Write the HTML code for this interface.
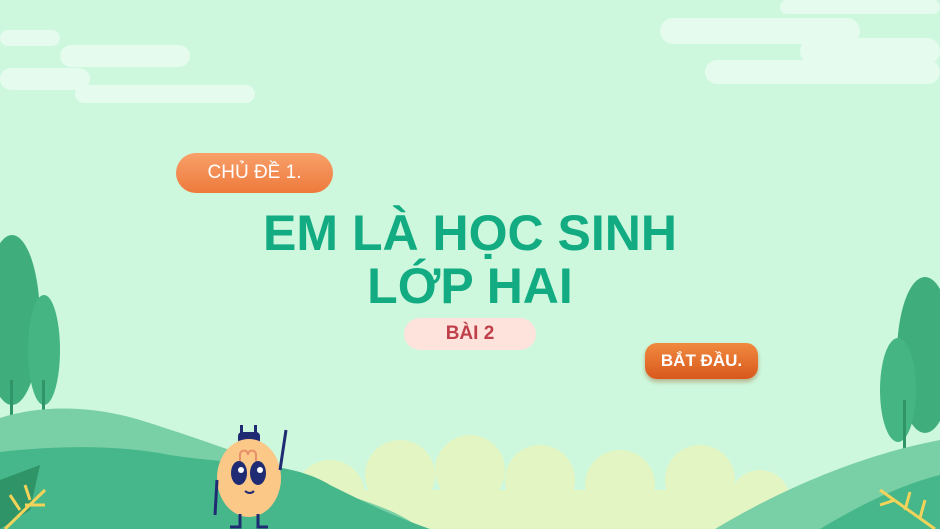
<!DOCTYPE html>
<html><head><meta charset="utf-8"><style>
body{margin:0;width:940px;height:529px;overflow:hidden;background:#cdf8dd;font-family:"Liberation Sans",sans-serif;position:relative}
svg{position:absolute;left:0;top:0}
.t{position:absolute;left:0;width:940px;text-align:center;color:#12ab82;font-weight:bold;font-size:50px;letter-spacing:0px}
.pill{position:absolute;border-radius:20px;text-align:center;font-weight:bold}
</style></head><body>
<svg width="940" height="529" viewBox="0 0 940 529">
<g fill="#e4fbee">
<rect x="660" y="18" width="200" height="26" rx="13"/><rect x="705" y="60" width="235" height="24" rx="12"/><rect x="780" y="0" width="160" height="14" rx="7"/><rect x="800" y="38" width="140" height="26" rx="13"/>
<rect x="0" y="68" width="90" height="22" rx="11"/><rect x="60" y="45" width="130" height="22" rx="11"/><rect x="75" y="85" width="180" height="18" rx="9"/><rect x="0" y="30" width="60" height="16" rx="8"/>
</g>
<g fill="#e3f5c3"><circle cx="330" cy="495" r="35"/><circle cx="400" cy="475" r="35"/><circle cx="470" cy="470" r="35"/><circle cx="540" cy="480" r="35"/><circle cx="620" cy="485" r="35"/><circle cx="700" cy="480" r="35"/><circle cx="760" cy="500" r="30"/><rect x="300" y="490" width="490" height="40"/></g>
<ellipse cx="12" cy="320" rx="28" ry="85" fill="#3fae7c"/><rect x="10" y="380" width="3" height="90" fill="#2f9467"/>
<ellipse cx="44" cy="350" rx="16" ry="55" fill="#45b584"/><rect x="42" y="380" width="3" height="50" fill="#2f9467"/>
<ellipse cx="925" cy="355" rx="28" ry="78" fill="#3fae7c"/><ellipse cx="898" cy="390" rx="18" ry="52" fill="#45b584"/><rect x="903" y="400" width="3" height="70" fill="#2f9467"/>
<path d="M0 418 C40 405 90 405 140 420 C220 445 300 475 330 490 C380 505 405 515 420 529 L0 529Z" fill="#79cfa6"/>
<path d="M0 452 C60 445 120 445 170 455 C230 465 290 460 330 485 C360 500 390 515 430 529 L0 529Z" fill="#46b78a"/>
<path d="M715 529 C780 490 860 455 940 440 L940 529Z" fill="#79cfa6"/>
<path d="M820 529 C860 505 900 485 940 475 L940 529Z" fill="#46b78a"/>
<path d="M0 480 L40 465 L30 510 L0 529Z" fill="#2f9467"/>
<g stroke="#f3d35a" stroke-width="3" fill="none"><path d="M5 529 L45 490 M20 510 L10 495 M30 500 L25 485 M25 505 L45 505"/><path d="M935 529 L880 490 M905 510 L910 492 M895 500 L880 505 M920 518 L925 500"/></g>
<g>
<rect x="240" y="425" width="3" height="10" fill="#1f2c73"/><rect x="254" y="425" width="3" height="10" fill="#1f2c73"/>
<rect x="238" y="432" width="22" height="14" rx="4" fill="#1f2c73"/>
<ellipse cx="249" cy="478" rx="32" ry="39" fill="#fbc888"/>
<path d="M240 455 c0-6 8-6 8 0 c0-6 8-6 8 0 v8 M240 455 v8" stroke="#e8906a" stroke-width="2" fill="none"/>
<ellipse cx="239" cy="473" rx="8" ry="12" fill="#1f2c73"/><ellipse cx="258" cy="473" rx="8" ry="12" fill="#1f2c73"/>
<circle cx="241" cy="470" r="3" fill="#fff"/><circle cx="260" cy="470" r="3" fill="#fff"/>
<path d="M245 491 q5 4 9 0" stroke="#1f2c73" stroke-width="2" fill="none"/>
<path d="M280 470 L286 430" stroke="#1f2c73" stroke-width="3"/><path d="M217 480 L215 515" stroke="#1f2c73" stroke-width="3"/>
<path d="M240 514 v13 h-10 M258 514 v13 h10" stroke="#1f2c73" stroke-width="3" fill="none"/>
</g>
</svg>
<div class="pill" style="left:176px;top:153px;width:157px;height:40px;line-height:40px;background:linear-gradient(#f8a06a,#ee7a3c);color:#fff;font-weight:normal;font-size:19px">CHỦ ĐỀ 1.</div>
<div class="t" style="top:205px;height:56px;line-height:56px">EM LÀ HỌC SINH</div>
<div class="t" style="top:258px;height:56px;line-height:56px">LỚP HAI</div>
<div class="pill" style="left:404px;top:318px;width:132px;height:32px;line-height:32px;background:#fde3dc;color:#c0404a;font-size:19px">BÀI 2</div>
<div class="pill" style="left:645px;top:343px;width:113px;height:36px;line-height:36px;background:linear-gradient(#f08a3f,#d9581c);color:#fff;font-size:17px;border-radius:12px;box-shadow:0 3px 4px rgba(150,80,30,.4)">BẮT ĐẦU.</div>
</body></html>
